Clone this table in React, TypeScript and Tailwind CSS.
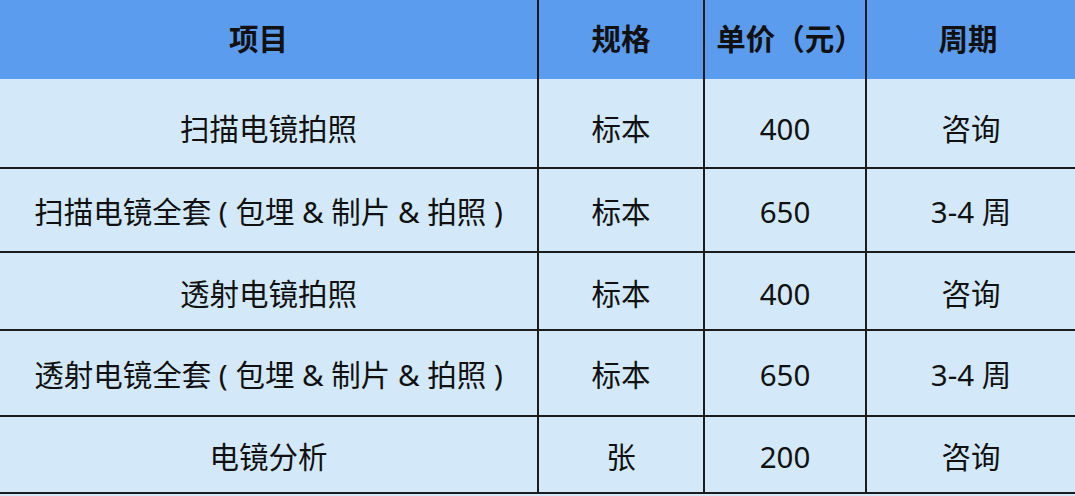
const rows = [
  { item: "扫描电镜拍照", spec: "标本", price: "400", period: "咨询", h: "h-[90px]", pad: "pt-[12px]" },
  { item: "扫描电镜全套 ( 包埋 & 制片 & 拍照 )", spec: "标本", price: "650", period: "3-4 周", h: "h-[84px]", pad: "pt-[4px]" },
  { item: "透射电镜拍照", spec: "标本", price: "400", period: "咨询", h: "h-[78px]", pad: "pt-[6px]" },
  { item: "透射电镜全套 ( 包埋 & 制片 & 拍照 )", spec: "标本", price: "650", period: "3-4 周", h: "h-[86px]", pad: "pt-[4px]" },
  { item: "电镜分析", spec: "张", price: "200", period: "咨询", h: "h-[77px]", pad: "pt-[6px]" },
];

export default function App() {
  return (
    <div
      className="w-[1075px] h-[496px] bg-[#d3e9fa] text-[29.5px] text-[#111]"
      style={{ fontFamily: '"Noto Sans", "Noto Sans CJK SC", sans-serif' }}
    >
      <div className="flex h-[79px] bg-[#5c9cee] font-bold">
        <div className="w-[539px] pr-[20px] border-r-2 border-[#1c1c1c] flex items-center justify-center">项目</div>
        <div className="w-[166px] border-r-2 border-[#1c1c1c] flex items-center justify-center">规格</div>
        <div className="w-[162px] pl-[10px] border-r-2 border-[#1c1c1c] flex items-center justify-center">单价（元）</div>
        <div className="flex-1 pr-[6px] flex items-center justify-center">周期</div>
      </div>
      {rows.map((r, i) => (
        <div key={i} className={`flex ${r.h} border-b-2 border-[#1c1c1c]`}>
          <div className={`w-[539px] ${r.pad} border-r-2 border-[#1c1c1c] flex items-center justify-center`}>{r.item}</div>
          <div className={`w-[166px] ${r.pad} border-r-2 border-[#1c1c1c] flex items-center justify-center`}>{r.spec}</div>
          <div className={`w-[162px] ${r.pad} border-r-2 border-[#1c1c1c] flex items-center justify-center`}>{r.price}</div>
          <div className={`flex-1 ${r.pad} flex items-center justify-center`}>{r.period}</div>
        </div>
      ))}
    </div>
  );
}
